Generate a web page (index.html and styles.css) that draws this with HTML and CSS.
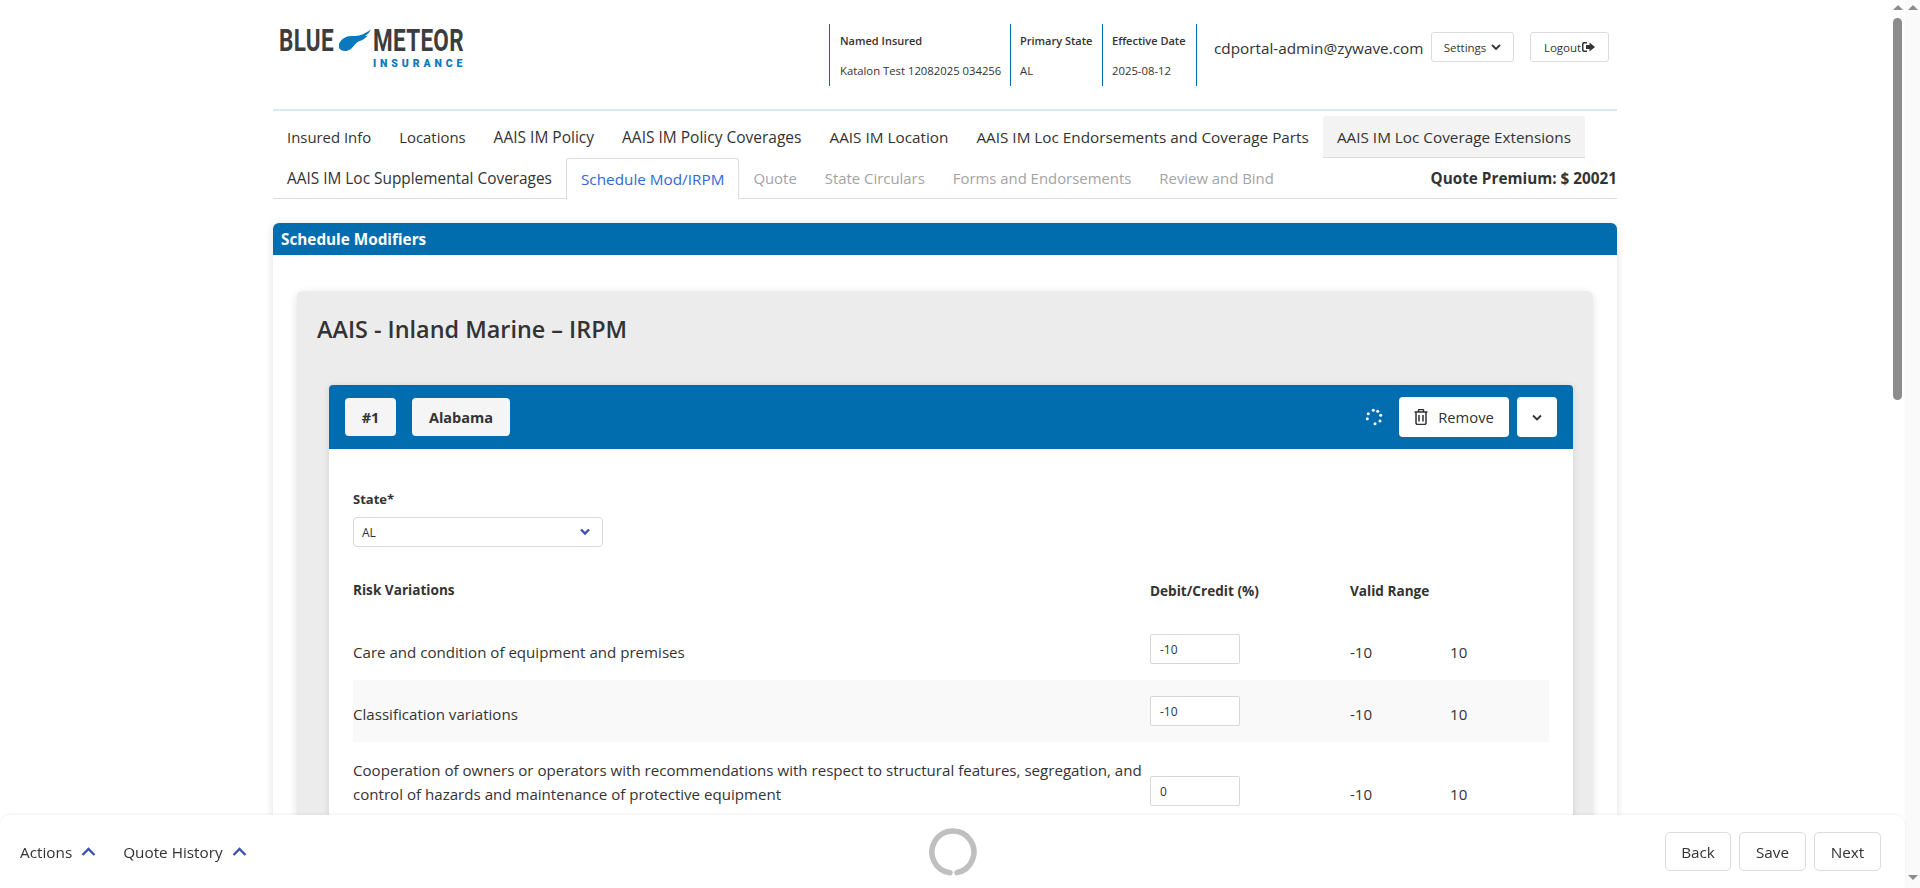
FILE: index.html
```html
<!DOCTYPE html>
<html lang="en">
  <head>
    <meta charset="UTF-8" />
    <title>Schedule Mod/IRPM</title>
    <link rel="stylesheet" href="styles.css">
  </head>
  <body>
    <div class="shell">
      <div class="page">
        <div class="container">
          <header class="top">
            <div class="logo">
              <div class="logo-line">
                <span class="logo-word logo-first">BLUE</span>
                <svg width="34" height="26" viewBox="60 0 34 26"><path class="logo-blue" d="M60 17c2-5 7-8 12-8 6 0 10 0 16-4 2-1 3-2 4-3-1 3-3 5-6 7 1 0 2 0 3-1-2 3-5 5-8 6-4 1-6 5-9 8-3 2-7 3-10 1-2-1-3-4-2-6z"/></svg>
                <span class="logo-word">METEOR</span>
              </div>
              <div class="logo-sub">INSURANCE</div>
            </div>
            <div class="info">
              <div class="info-cell info-name">
                <b>Named Insured</b>
                <span>Katalon Test 12082025 034256</span>
              </div>
              <div class="info-cell info-state">
                <b>Primary State</b>
                <span>AL</span>
              </div>
              <div class="info-cell info-date">
                <b>Effective Date</b>
                <span>2025-08-12</span>
              </div>
            </div>
            <div class="email">cdportal-admin@zywave.com</div>
            <button class="small-btn settings">
              Settings
              <svg width="10" height="8" viewBox="0 0 10 8"><path class="chev-dark" d="M1 2l4 4 4-4"/></svg>
            </button>
            <button class="small-btn logout">
              Logout<svg width="13" height="12" viewBox="0 0 13 12"><path class="fill-dark" d="M5 1H2a2 2 0 0 0-2 2v6a2 2 0 0 0 2 2h3V9.500H2.500a1 1 0 0 1-1-1v-5a1 1 0 0 1 1-1H5zM7.500 1.500v2.500H4v4h3.500v2.500L13 6z"/></svg>
            </button>
          </header>

          <nav class="tabs">
            <div class="tab-row">
              <a class="tab tab-narrow">Insured Info</a>
              <a class="tab tab-narrow">Locations</a>
              <a class="tab tab-wide">AAIS IM Policy</a>
              <a class="tab tab-wide">AAIS IM Policy Coverages</a>
              <a class="tab">AAIS IM Location</a>
              <a class="tab">AAIS IM Loc Endorsements and Coverage Parts</a>
              <a class="tab tab-hover">AAIS IM Loc Coverage Extensions</a>
            </div>
            <div class="tab-row tab-row-last">
              <a class="tab tab-mid">AAIS IM Loc Supplemental Coverages</a>
              <a class="tab tab-active">Schedule Mod/IRPM</a>
              <a class="tab tab-off">Quote</a>
              <a class="tab tab-off">State Circulars</a>
              <a class="tab tab-off">Forms and Endorsements</a>
              <a class="tab tab-off">Review and Bind</a>
              <div class="premium">Quote Premium: $ 20021</div>
            </div>
          </nav>

          <section class="panel">
            <div class="panel-head">Schedule Modifiers</div>
            <div class="panel-body">
              <div class="gray-card">
                <h2>AAIS - Inland Marine – IRPM</h2>
                <div class="state-card">
                  <div class="state-head">
                    <span class="badge badge-num">#1</span>
                    <span class="badge badge-state">Alabama</span>
                    <svg class="dots" width="18" height="18" viewBox="0 0 18 18">
                      <circle cx="8.300" cy="2.300" r="1.500"/>
                      <circle cx="12.700" cy="3.300" r="1.500"/>
                      <circle cx="15.700" cy="7.300" r="1.500"/>
                      <circle cx="15" cy="13" r="1.500"/>
                      <circle cx="10" cy="15.700" r="1.500"/>
                      <circle cx="2.300" cy="10.700" r="1.500"/>
                      <circle cx="3.300" cy="5.700" r="1.500"/>
                    </svg>
                    <button class="head-btn remove">
                      <svg width="14" height="16" viewBox="0 0 14 16"><path class="trash" d="M.5 3h13M2 3v11a1.500 1.500 0 0 0 1.500 1.500h7A1.500 1.500 0 0 0 12 14V3M4.500 3V1.500a1 1 0 0 1 1-1h3a1 1 0 0 1 1 1V3M5 6v6.500M9 6v6.500"/></svg>
                      Remove
                    </button>
                    <button class="head-btn collapse">
                      <svg width="10" height="7" viewBox="0 0 10 7"><path class="chev-dark" d="M1 1.500l4 4 4-4"/></svg>
                    </button>
                  </div>
                  <div class="state-body">
                    <label class="state-label">State*</label>
                    <div class="select">
                      AL
                      <svg width="10" height="8" viewBox="0 0 10 8"><path class="chev-blue" d="M1 1.500l4 4 4-4"/></svg>
                    </div>
                    <div class="risk-row risk-head">
                      <span>Risk Variations</span>
                      <span>Debit/Credit (%)</span>
                      <span>Valid Range</span>
                    </div>
                    <div class="risk-row">
                      <span>Care and condition of equipment and premises</span>
                      <span class="input">-10</span>
                      <span>-10</span>
                      <span>10</span>
                    </div>
                    <div class="risk-row risk-stripe">
                      <span>Classification variations</span>
                      <span class="input">-10</span>
                      <span>-10</span>
                      <span>10</span>
                    </div>
                    <div class="risk-row risk-tall">
                      <span>Cooperation of owners or operators with recommendations with respect to structural features, segregation, and control of hazards and maintenance of protective equipment</span>
                      <span class="input">0</span>
                      <span>-10</span>
                      <span>10</span>
                    </div>
                  </div>
                </div>
              </div>
            </div>
          </section>
        </div>
      </div>
      <div class="scroll-track">
        <i class="arrow-up"></i>
        <div class="scroll-thumb"></div>
      </div>
      <div class="scroll-track scroll-outer">
        <i class="arrow-up"></i>
        <i class="arrow-down"></i>
      </div>
    </div>

    <footer class="bottom">
      <div class="bottom-left">
        <a>Actions <svg width="15" height="10" viewBox="0 0 15 10"><path class="chev-blue" d="M1.500 8l6-6 6 6"/></svg></a>
        <a>Quote History <svg width="15" height="10" viewBox="0 0 15 10"><path class="chev-blue" d="M1.500 8l6-6 6 6"/></svg></a>
      </div>
      <svg class="ring" width="48" height="48" viewBox="0 0 48 48"><path d="M28 44.600A21 21 0 1 0 21 44.800"/></svg>
      <div class="bottom-right">
        <button class="foot-btn foot-back">Back</button>
        <button class="foot-btn">Save</button>
        <button class="foot-btn">Next</button>
      </div>
    </footer>
  </body>
</html>
```

FILE: styles.css
```css
* {
  box-sizing: border-box;
}
html,
body {
  margin: 0;
  height: 100%;
  overflow: hidden;
}
body {
  background: #fff;
  color: #333;
  font-family: "Open Sans", "Noto Sans", sans-serif;
  font-size: 15.1px;
}
button {
  font-family: inherit;
  color: #333;
  background: #fff;
}
a {
  color: inherit;
  text-decoration: none;
}

.shell {
  display: flex;
  height: 888px;
}
.page {
  flex: 1;
  overflow: hidden;
}
.container {
  width: 1344px;
  margin: 0 auto;
}

/* scrollbars */
.scroll-track {
  width: 15px;
  position: relative;
  background: #fff;
  display: flex;
  flex-direction: column;
  align-items: center;
  padding-top: 5px;
}
.scroll-outer {
  background: #fafafa;
}
.arrow-up {
  width: 0;
  height: 0;
  border-left: 5px solid transparent;
  border-right: 5px solid transparent;
  border-bottom: 5px solid #8c8c8c;
}
.arrow-down {
  position: absolute;
  bottom: 8px;
  width: 0;
  height: 0;
  border-left: 5px solid transparent;
  border-right: 5px solid transparent;
  border-top: 5px solid #8c8c8c;
}
.scroll-thumb {
  width: 9px;
  height: 382px;
  margin-top: 8px;
  background: #8c8c8c;
  border-radius: 5px;
}

/* header */
.top {
  height: 111px;
  border-bottom: 2px solid #d9e8f4;
  display: flex;
  align-items: flex-start;
  position: relative;
}
.logo {
  width: 190px;
  margin: 27px 0 0 6px;
}
.logo-line {
  display: flex;
  align-items: center;
  height: 26px;
}
.logo-word {
  font-family: "Roboto", sans-serif;
  font-weight: 700;
  font-size: 22.500px;
  line-height: 26px;
  letter-spacing: 0.300px;
  color: #3d3d3d;
  transform: scaleY(1.400);
}
.logo-first {
  width: 60px;
}
.logo-blue {
  fill: #0a78bd;
}
.logo-sub {
  font-family: "Roboto", sans-serif;
  font-weight: 900;
  font-size: 10.500px;
  line-height: 10px;
  letter-spacing: 3.900px;
  color: #0a78bd;
  margin: 6px 0 0 94px;
  white-space: nowrap;
}
.info {
  display: flex;
  margin: 24px 0 0 360px;
  height: 62px;
  border-right: 1px solid #026dae;
}
.info-cell {
  border-left: 1px solid #026dae;
  padding-left: 10px;
  display: flex;
  flex-direction: column;
  font-size: 11.300px;
  white-space: nowrap;
}
.info-name {
  width: 181px;
}
.info-state {
  width: 92px;
  padding-left: 9px;
}
.info-date {
  width: 94px;
  padding-left: 9px;
}
.info-cell b {
  font-weight: 600;
  font-size: 11px;
  line-height: 16px;
  margin-top: 9px;
}
.info-cell span {
  line-height: 16px;
  margin-top: 14px;
}
.email {
  width: 209px;
  margin: 38px 0 0 17px;
  font-size: 15.300px;
  line-height: 21px;
  white-space: nowrap;
}
.small-btn {
  height: 30px;
  margin-top: 32px;
  border: 1px solid #dcdcdc;
  border-radius: 3px;
  font-size: 11.500px;
  padding: 0;
  display: flex;
  align-items: center;
  justify-content: center;
}
.settings {
  width: 83px;
  margin-left: 8px;
  gap: 5px;
}
.logout {
  width: 79px;
  margin-left: 16px;
  gap: 1px;
}
.chev-dark {
  fill: none;
  stroke: #333;
  stroke-width: 1.800;
}
.chev-blue {
  fill: none;
  stroke: #3f51b5;
  stroke-width: 2.400;
}
.fill-dark {
  fill: #333;
}

/* tabs */
.tabs {
  margin-top: 5px;
}
.tab-row {
  display: flex;
  align-items: stretch;
  height: 42px;
}
.tab-row-last {
  height: 41px;
  border-bottom: 1px solid #ddd;
}
.tab {
  padding: 0 14px;
  display: flex;
  align-items: center;
  white-space: nowrap;
  font-size: 15.300px;
}
.tab-narrow {
  font-size: 14.900px;
}
.tab-mid {
  font-size: 15.400px;
}
.tab-wide {
  font-size: 15.500px;
}
.tab-hover {
  background: #f3f3f3;
  border-bottom: 1px solid #ddd;
  border-radius: 3px 3px 0 0;
}
.tab-active {
  color: #3367d6;
  border: 1px solid #ddd;
  border-bottom: 0;
  background: #fff;
  border-radius: 3px 3px 0 0;
  height: 41px;
}
.tab-off {
  color: #a3a3a3;
  font-size: 14.900px;
}
.premium {
  margin-left: auto;
  align-self: center;
  font-weight: 700;
  font-size: 15.300px;
}

/* panel */
.panel {
  margin-top: 24px;
  box-shadow: 0 1px 8px rgba(0, 0, 0, 0.12);
  border-radius: 6px 6px 0 0;
}
.panel-head {
  height: 32px;
  background: #026dae;
  color: #fff;
  font-weight: 700;
  font-size: 15.300px;
  line-height: 32px;
  padding-left: 8px;
  border-radius: 6px 6px 0 0;
}
.panel-body {
  background: #fff;
  padding: 36px 24px 0;
}
.gray-card {
  background: #ececec;
  border-radius: 6px;
  padding: 0 20px 0 32px;
  box-shadow: 0 2px 8px rgba(0, 0, 0, 0.12);
}
.gray-card h2 {
  margin: 0 0 0 -12px;
  padding-top: 22px;
  height: 94px;
  font-size: 23.400px;
  line-height: 32px;
  font-weight: 600;
}
.state-card {
  background: #fff;
  border-radius: 4px 4px 0 0;
  box-shadow: 0 1px 6px rgba(0, 0, 0, 0.12);
  height: 500px;
}
.state-head {
  height: 64px;
  background: #026dae;
  border-radius: 4px 4px 0 0;
  display: flex;
  align-items: center;
  padding: 0 16px;
}
.badge {
  height: 38px;
  background: #f5f5f5;
  border-radius: 4px;
  font-weight: 700;
  font-size: 14.500px;
  display: flex;
  align-items: center;
  justify-content: center;
}
.badge-num {
  width: 51px;
}
.badge-state {
  width: 98px;
  margin-left: 16px;
}
.dots {
  margin-left: auto;
  fill: #fff;
}
.head-btn {
  height: 40px;
  border: 0;
  border-radius: 4px;
  display: flex;
  align-items: center;
  justify-content: center;
  padding: 0;
  font-size: 14.800px;
}
.remove {
  width: 110px;
  margin-left: 16px;
  gap: 10px;
}
.collapse {
  width: 40px;
  margin-left: 8px;
}
.trash {
  fill: none;
  stroke: #333;
  stroke-width: 1.500;
}

/* state form */
.state-body {
  padding: 41px 24px 0;
}
.state-label {
  display: block;
  font-size: 13px;
  font-weight: 700;
  line-height: 18px;
}
.select {
  width: 250px;
  height: 30px;
  margin-top: 9px;
  border: 1px solid #d8d8d8;
  border-radius: 4px;
  font-size: 12px;
  display: flex;
  align-items: center;
  justify-content: space-between;
  padding: 0 12px 0 8px;
}
.risk-row {
  display: grid;
  grid-template-columns: 797px 200px 100px 1fr;
  align-items: center;
  height: 62px;
}
.risk-row > span {
  padding-top: 6px;
}
.risk-row > span:first-child {
  line-height: 24px;
}
.risk-head {
  height: 36px;
  margin: 25px 0 10px;
  font-weight: 700;
  font-size: 13.600px;
  grid-template-columns: 797px 200px 1fr;
}
.risk-head > span {
  padding-top: 0;
}
.risk-stripe {
  background: #f9f9f9;
}
.risk-tall {
  height: 98px;
}
.risk-tall > span:first-child {
  align-self: start;
  padding: 16px 6px 0 0;
}
.risk-row > .input {
  width: 90px;
  height: 30px;
  border: 1px solid #d8d8d8;
  border-radius: 2px;
  background: #fff;
  font-size: 12px;
  display: flex;
  align-items: center;
  padding: 0 0 0 9px;
}

/* footer bar */
.bottom {
  position: fixed;
  left: 0;
  right: 15px;
  bottom: 0;
  height: 73px;
  background: #fff;
  border-radius: 10px;
  box-shadow: 0 -1px 3px rgba(0, 0, 0, 0.06);
  display: grid;
  grid-template-columns: 1fr auto 1fr;
  align-items: center;
  padding: 0 24px 0 20px;
}
.bottom-left {
  display: flex;
  gap: 27px;
  font-size: 15.300px;
}
.bottom-left a {
  display: flex;
  align-items: center;
  gap: 9px;
}
.bottom-right {
  display: flex;
  justify-content: flex-end;
  gap: 8px;
}
.ring {
  margin-left: 5px;
  fill: none;
  stroke: #bfbfbf;
  stroke-width: 5.500;
  stroke-linecap: round;
}
.foot-btn {
  width: 67px;
  height: 39px;
  border: 1px solid #dcdcdc;
  border-radius: 5px;
  font-size: 15.300px;
  padding: 0;
}
.foot-back {
  width: 66px;
}
```
